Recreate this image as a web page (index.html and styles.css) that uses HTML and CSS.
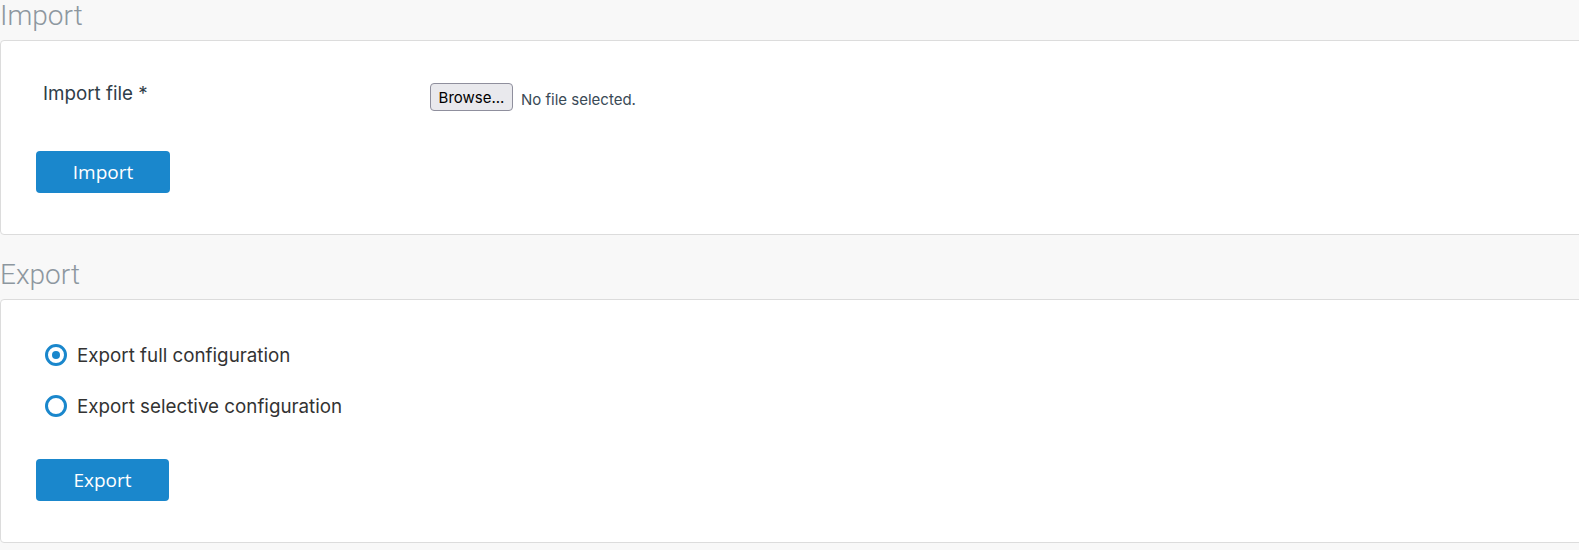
FILE: index.html
```html
<!DOCTYPE html>
<html lang="en">
<head>
<meta charset="utf-8">
<title>Import / Export</title>
<link rel="stylesheet" href="styles.css">
</head>
<body>
<section class="section">
  <h2 class="section-title">Import</h2>
  <div class="card card-import">
    <div class="form-row">
      <label class="field-label">Import file *</label>
      <div class="file-field">
        <span class="browse-btn">Browse...</span>
        <span class="file-status">No file selected.</span>
      </div>
    </div>
    <button class="primary-btn btn-import">Import</button>
  </div>
</section>
<section class="section section-export">
  <h2 class="section-title">Export</h2>
  <div class="card card-export">
    <label class="radio-row">
      <span class="radio checked"></span>
      <span class="radio-text">Export full configuration</span>
    </label>
    <label class="radio-row second">
      <span class="radio"></span>
      <span class="radio-text">Export selective configuration</span>
    </label>
    <button class="primary-btn btn-export">Export</button>
  </div>
</section>
</body>
</html>
```
FILE: styles.css
```css
html, body {
  margin: 0;
  padding: 0;
}
body {
  background: #f8f8f8;
  font-family: Inter, Roboto, "Liberation Sans", sans-serif;
  color: #2e3a44;
  overflow: hidden;
  width: 1579px;
}
.section-title {
  margin: 0;
  height: 40px;
  box-sizing: border-box;
  padding-bottom: 8px;
  font-family: Roboto, sans-serif;
  font-size: 28px;
  line-height: 32px;
  font-weight: 300;
  color: #8d979f;
}
.section-export {
  margin-top: 24px;
}
.card {
  background: #fff;
  border: 1px solid #dcdcdc;
  border-radius: 4px;
  margin-right: -5px;
  padding-left: 35px;
  display: flex;
  flex-direction: column;
  align-items: flex-start;
}
.card-import {
  padding-top: 39px;
  padding-bottom: 41px;
}
.form-row {
  display: flex;
  align-items: center;
  height: 34px;
}
.field-label {
  width: 387px;
  padding-left: 7px;
  font-size: 18.8px;
  margin-top: -8px;
  color: #2f3d48;
}
.file-field {
  display: flex;
  align-items: center;
  gap: 8px;
}
.browse-btn {
  box-sizing: border-box;
  height: 28px;
  width: 83px;
  border: 1px solid #8f8f9d;
  border-radius: 4px;
  background: #e9e9ed;
  font-family: Inter, sans-serif;
  font-size: 15px;
  color: #000;
  display: flex;
  align-items: center;
  justify-content: center;
}
.file-status {
  font-family: Inter, sans-serif;
  font-size: 15px;
  color: #3a4a56;
  margin-top: 4px;
}
.primary-btn {
  border: none;
  border-radius: 4px;
  background: #1a87cc;
  color: #fff;
  font-family: "Open Sans", sans-serif;
  font-size: 19px;
  height: 42px;
  width: 134px;
  padding: 0;
}
.btn-import {
  margin-top: 37px;
}
.card-export {
  padding-top: 40px;
  padding-bottom: 41px;
}
.radio-row {
  display: flex;
  align-items: center;
  height: 30px;
}
.radio-row.second {
  margin-top: 21px;
}
.radio {
  box-sizing: border-box;
  width: 22px;
  height: 22px;
  margin-left: 9px;
  border: 3px solid #1a87cc;
  border-radius: 50%;
  display: flex;
  align-items: center;
  justify-content: center;
}
.radio.checked::after {
  content: "";
  width: 8px;
  height: 8px;
  border-radius: 50%;
  background: #1a87cc;
}
.radio-text {
  margin-left: 10px;
  font-size: 18.8px;
  color: #333;
}
.btn-export {
  margin-top: 38px;
  width: 133px;
}
```
